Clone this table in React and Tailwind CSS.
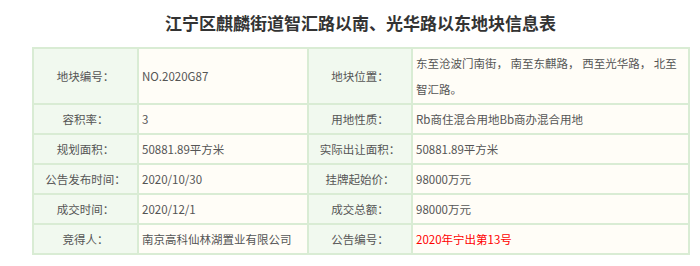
import React from "react";

const rows = [
  {
    a: "地块编号：",
    b: "NO.2020G87",
    c: "地块位置：",
    d: "东至沧波门南街， 南至东麒路， 西至光华路， 北至智汇路。",
  },
  { a: "容积率：", b: "3", c: "用地性质：", d: "Rb商住混合用地Bb商办混合用地" },
  { a: "规划面积：", b: "50881.89平方米", c: "实际出让面积：", d: "50881.89平方米" },
  { a: "公告发布时间：", b: "2020/10/30", c: "挂牌起始价：", d: "98000万元" },
  { a: "成交时间：", b: "2020/12/1", c: "成交总额：", d: "98000万元" },
  { a: "竞得人：", b: "南京高科仙林湖置业有限公司", c: "公告编号：", d: "2020年宁出第13号", red: true },
];

const label =
  "border border-[#d9ecd4] bg-[#f1f9ef] text-center align-middle py-[1px] px-[3px]";
const value =
  "border border-[#d9ecd4] bg-[#fffdf7] text-left align-middle py-[1px] px-[3px]";

export default function App() {
  return (
    <div
      className="w-[700px] h-[266px] bg-white text-[#555]"
      style={{ fontFamily: '"Noto Sans CJK SC", "Noto Sans", sans-serif' }}
    >
      <div className="pl-[32px] w-[689px]">
        <h1 className="h-[47px] flex items-center justify-center text-[17px] font-bold text-[#333] pb-[2px]">
          江宁区麒麟街道智汇路以南、光华路以东地块信息表
        </h1>
        <table className="w-[657px] border border-[#d9ecd4] border-separate border-spacing-0 table-fixed text-[11.5px] leading-[26px]">
          <colgroup>
            <col className="w-[105px]" />
            <col className="w-[170px]" />
            <col className="w-[104px]" />
            <col className="w-[277px]" />
          </colgroup>
          <tbody>
            {rows.map((r, i) => (
              <tr key={i}>
                <td className={label}>{r.a}</td>
                <td className={value}>{r.b}</td>
                <td className={label}>{r.c}</td>
                <td className={`${value} ${r.red ? "text-[#ff0000]" : ""}`}>{r.d}</td>
              </tr>
            ))}
          </tbody>
        </table>
      </div>
    </div>
  );
}
